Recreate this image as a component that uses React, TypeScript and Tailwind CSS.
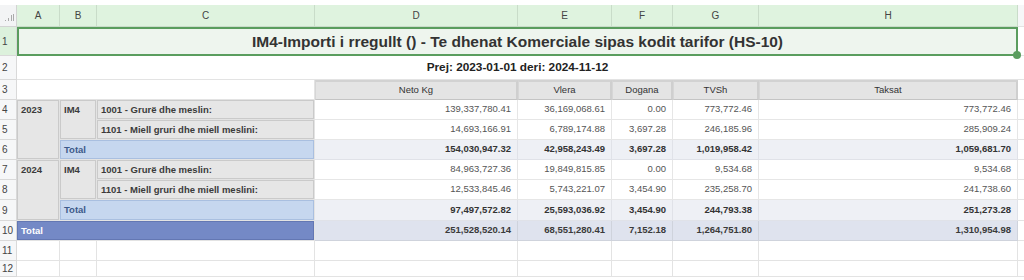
import React from "react";

const font = { fontFamily: '"Liberation Sans", Arial, sans-serif' };

type Row = {
  n: number;
  label: string;
  v: string[];
};

const RH = ({ n, green }: { n: number | string; green?: boolean }) => (
  <div
    className={`flex items-center pl-[2px] text-[10px] text-[#444] border-r border-b border-[#d9d9d9] ${
      green ? "bg-[#dcf1dc]" : "bg-[#f6f7f8]"
    }`}
  >
    {n}
  </div>
);

const Extra = ({ head }: { head?: boolean }) => (
  <div className={`border-b border-[#e3e3e3] ${head ? "bg-[#f6f7f8] border-[#d9d9d9]" : "bg-white"}`} />
);

const Blank = () => <div className="border-r border-b border-[#e3e3e3] bg-white" />;

const Num = ({ v, kind }: { v: string; kind: "n" | "t" | "g" }) => (
  <div
    className={`flex items-center justify-end pr-[6px] text-[9.5px] border-r border-b ${
      kind === "n"
        ? "bg-white text-[#555] border-[#e6e6e6]"
        : kind === "t"
        ? "bg-[#eef0f5] text-[#333] font-bold border-[#e0e2e8]"
        : "bg-[#dfe3ee] text-[#3a3a3a] font-bold border-[#cfd3dc]"
    }`}
  >
    {v}
  </div>
);

const Gray = ({ children, cls }: { children?: React.ReactNode; cls: string }) => (
  <div className={`bg-white border-r border-b border-[#e3e3e3] p-0 ${cls}`}>
    <div className="h-full w-full bg-[#e6e6e6] border border-[#cacaca] pl-[3px] pt-[3px] text-[9.5px] font-bold text-[#3b3b3b] leading-[12px]">
      {children}
    </div>
  </div>
);

export default function App() {
  const cols = ["A", "B", "C", "D", "E", "F", "G", "H"];
  const g1: Row[] = [
    { n: 4, label: "1001 - Grurë dhe meslin:", v: ["139,337,780.41", "36,169,068.61", "0.00", "773,772.46", "773,772.46"] },
    { n: 5, label: "1101 - Miell gruri dhe miell meslini:", v: ["14,693,166.91", "6,789,174.88", "3,697.28", "246,185.96", "285,909.24"] },
  ];
  const t1 = ["154,030,947.32", "42,958,243.49", "3,697.28", "1,019,958.42", "1,059,681.70"];
  const g2: Row[] = [
    { n: 7, label: "1001 - Grurë dhe meslin:", v: ["84,963,727.36", "19,849,815.85", "0.00", "9,534.68", "9,534.68"] },
    { n: 8, label: "1101 - Miell gruri dhe miell meslini:", v: ["12,533,845.46", "5,743,221.07", "3,454.90", "235,258.70", "241,738.60"] },
  ];
  const t2 = ["97,497,572.82", "25,593,036.92", "3,454.90", "244,793.38", "251,273.28"];
  const gt = ["251,528,520.14", "68,551,280.41", "7,152.18", "1,264,751.80", "1,310,954.98"];

  return (
    <div className="w-[1024px] h-[280px] bg-white overflow-hidden pt-[5px] relative" style={font}>
      <div className="grid grid-cols-[17px_43px_37px_218px_203px_94px_61px_86px_259px_6px] grid-rows-[22px_29px_24px_20px_20px_20px_20px_20px_20px_21px_20px_20px]">
        {/* header row */}
        <div className="bg-[#f3f4f5] border-r border-b border-[#d3d3d3] flex items-end justify-end pr-[2px] pb-[4px]">
          <svg width="9" height="8" viewBox="0 0 9 8">
            <rect x="0" y="6" width="1" height="1" fill="#aaa" />
            <rect x="3" y="4" width="1" height="3" fill="#aaa" />
            <rect x="6" y="1" width="1" height="6" fill="#aaa" />
            <rect x="8" y="0" width="1" height="7" fill="#aaa" />
          </svg>
        </div>
        {cols.map((c) => (
          <div
            key={c}
            className="bg-[#dff3df] border-r border-b border-[#c9dcc9] flex items-center justify-center text-[10px] text-[#444]"
          >
            {c}
          </div>
        ))}
        <Extra head />

        {/* row 1 */}
        <RH n={1} green />
        <div className="col-span-8 bg-[#eef5ee] border-2 border-[#5a9d5e] flex items-center justify-center text-[15.5px] font-bold text-[#333] relative">
          IM4-Importi i rregullt () - Te dhenat Komerciale sipas kodit tarifor (HS-10)
          <span className="absolute -right-[5px] -bottom-[5px] w-[8px] h-[8px] rounded-full bg-[#5a9d5e]" />
        </div>
        <Extra />

        {/* row 2 */}
        <RH n={2} />
        <div className="col-span-8 bg-white border-b border-[#e3e3e3] flex items-center justify-center text-[11.8px] font-bold text-[#222]">
          Prej: 2023-01-01 deri: 2024-11-12
        </div>
        <Extra />

        {/* row 3 */}
        <RH n={3} />
        <div className="bg-white border-b border-[#e3e3e3]" />
        <div className="bg-white border-b border-[#e3e3e3]" />
        <div className="bg-white border-r border-b border-[#e3e3e3]" />
        {["Neto Kg", "Vlera", "Dogana", "TVSh", "Taksat"].map((h) => (
          <div
            key={h}
            className="bg-[#e4e4e4] border-t-2 border-r-2 border-b border-l border-t-[#d2d2d2] border-r-[#cfcfcf] border-b-[#c4c4c4] border-l-[#d6d6d6] flex items-center justify-center text-[9.5px] text-[#333]"
          >
            {h}
          </div>
        ))}
        <Extra />

        {[
          { year: "2023", rows: g1, total: t1, tn: 6 },
          { year: "2024", rows: g2, total: t2, tn: 9 },
        ].map((grp) => (
          <React.Fragment key={grp.year}>
            {grp.rows.map((r, i) => (
              <React.Fragment key={r.n}>
                <RH n={r.n} />
                {i === 0 && (
                  <>
                    <Gray cls="row-span-3">{grp.year}</Gray>
                    <Gray cls="row-span-2">IM4</Gray>
                  </>
                )}
                <Gray cls="">{r.label}</Gray>
                {r.v.map((v, j) => (
                  <Num key={j} v={v} kind="n" />
                ))}
                <Extra />
              </React.Fragment>
            ))}
            <RH n={grp.tn} />
            <div className="col-span-2 bg-white border-r border-b border-[#e3e3e3]">
              <div className="h-full w-full bg-[#c6d7ef] border border-[#a9bfe0] pl-[3px] pt-[3px] text-[9.5px] font-bold text-[#3d5a8a] leading-[12px]">
                Total
              </div>
            </div>
            {grp.total.map((v, j) => (
              <Num key={j} v={v} kind="t" />
            ))}
            <Extra />
          </React.Fragment>
        ))}

        {/* grand total */}
        <RH n={10} />
        <div className="col-span-3 bg-white border-r border-b border-[#e3e3e3]">
          <div className="h-full w-full bg-[#7489c6] border border-[#6377b3] pl-[3px] pt-[3px] text-[9.5px] font-bold text-white leading-[12px]">
            Total
          </div>
        </div>
        {gt.map((v, j) => (
          <Num key={j} v={v} kind="g" />
        ))}
        <Extra />

        {[11, 12].map((n) => (
          <React.Fragment key={n}>
            <RH n={n} />
            {cols.map((c) => (
              <Blank key={c} />
            ))}
            <Extra />
          </React.Fragment>
        ))}
      </div>
    </div>
  );
}
